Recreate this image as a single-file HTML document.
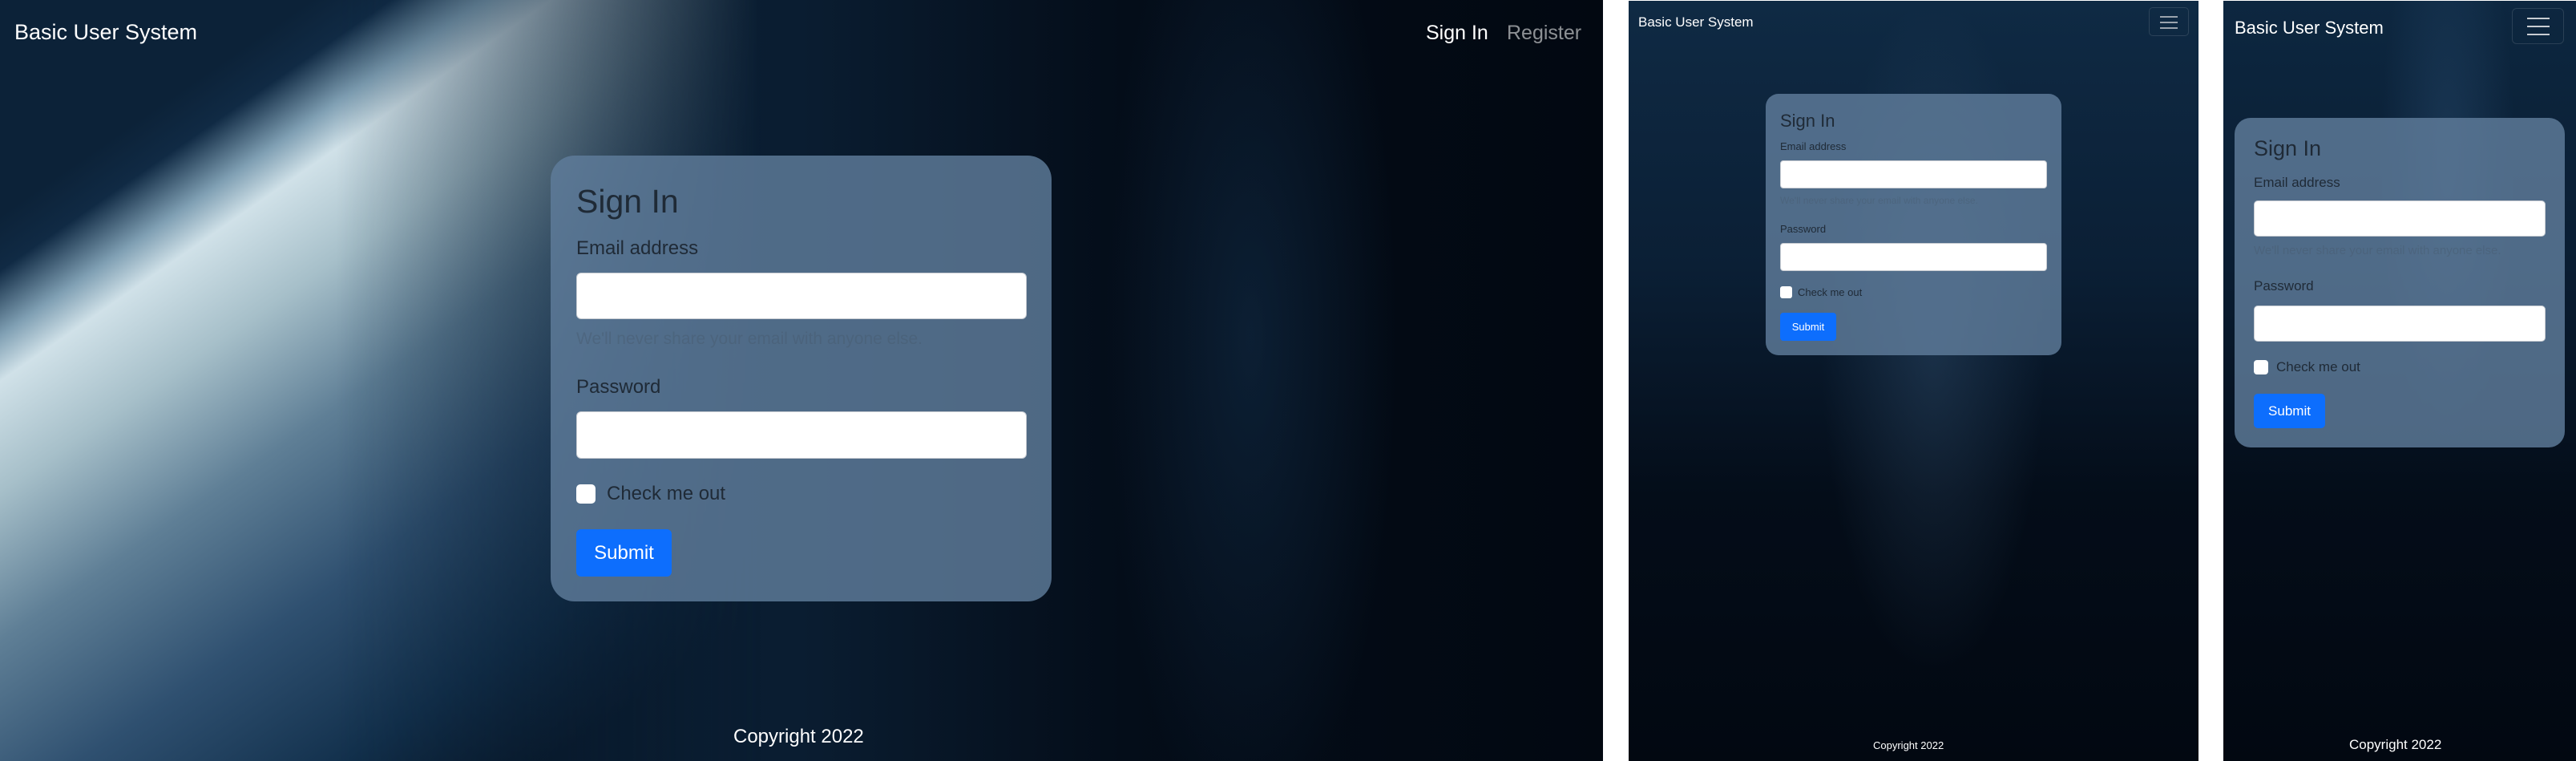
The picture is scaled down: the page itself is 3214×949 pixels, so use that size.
<!DOCTYPE html>
<html><head><meta charset="utf-8"><style>
*{box-sizing:border-box;margin:0;padding:0}
body{width:3214px;height:949px;background:#fff;position:relative;overflow:hidden;font-family:"Liberation Sans",sans-serif}
.p{position:absolute;top:0;height:949px;overflow:hidden}
.a{position:absolute;white-space:nowrap}
.card{position:absolute;background:rgba(95,125,155,0.82)}
.in{position:absolute;background:#fff;border:1px solid #c8ccd2}
.btn{position:absolute;background:#0d6efd;color:#fff;text-align:center}
.cb{position:absolute;background:#fff}
.t{color:#1f2a36}
</style></head><body>

<!-- Panel 1 -->
<div class="p" style="left:0;width:2000px;background:
radial-gradient(ellipse 260px 900px at 1560px 420px, rgba(20,50,80,0.5), transparent 70%),
linear-gradient(90deg,#0c2238 0%,#0a1d31 50%,#040d19 70%,#020811 100%);">
  <svg width="2000" height="949" style="position:absolute;left:0;top:0">
    <defs>
      <linearGradient id="s" gradientUnits="userSpaceOnUse" x1="240" y1="102" x2="780" y2="883">
        <stop offset="0" stop-color="#0c2238"/>
        <stop offset="0.06" stop-color="#102a44"/>
        <stop offset="0.13" stop-color="#7f9fb3"/>
        <stop offset="0.18" stop-color="#d0e1e8"/>
        <stop offset="0.30" stop-color="#a6bfc9"/>
        <stop offset="0.46" stop-color="#5f7f96"/>
        <stop offset="0.65" stop-color="#2f5070"/>
        <stop offset="0.85" stop-color="#12304c"/>
        <stop offset="1" stop-color="#071627"/>
      </linearGradient>
      <linearGradient id="m" gradientUnits="userSpaceOnUse" x1="0" y1="0" x2="1000" y2="0">
        <stop offset="0.42" stop-color="#fff"/>
        <stop offset="0.95" stop-color="#000"/>
      </linearGradient>
      <mask id="mk"><rect width="2000" height="949" fill="url(#m)"/></mask>
    </defs>
    <rect width="2000" height="949" fill="url(#s)" mask="url(#mk)"/>
  </svg>
  <div class="a" style="left:18px;top:25px;font-size:27px;color:#fff">Basic User System</div>
  <div class="a" style="left:1779px;top:27px;font-size:25px;color:#fff">Sign In</div>
  <div class="a" style="left:1880px;top:27px;font-size:25px;color:rgba(255,255,255,0.55)">Register</div>
  <div class="card" style="left:687px;top:194px;width:625px;height:556px;border-radius:30px"></div>
  <div class="a t" style="left:719px;top:228px;font-size:41px">Sign In</div>
  <div class="a t" style="left:719px;top:296px;font-size:24px">Email address</div>
  <div class="in" style="left:719px;top:340px;width:562px;height:58px;border-radius:6px"></div>
  <div class="a" style="left:719px;top:411px;font-size:21px;color:rgba(70,90,110,0.45)">We'll never share your email with anyone else.</div>
  <div class="a t" style="left:719px;top:469px;font-size:24px">Password</div>
  <div class="in" style="left:719px;top:513px;width:562px;height:59px;border-radius:6px"></div>
  <div class="cb" style="left:719px;top:604px;width:24px;height:24px;border-radius:5px"></div>
  <div class="a t" style="left:757px;top:602px;font-size:24px">Check me out</div>
  <div class="btn" style="left:719px;top:660px;width:119px;height:59px;border-radius:6px;font-size:24px;line-height:59px">Submit</div>
  <div class="a" style="left:915px;top:905px;font-size:24px;color:#fff">Copyright 2022</div>
</div>

<!-- Panel 2 -->
<div class="p" style="left:2032px;width:711px;top:1px;height:948px;background:
radial-gradient(ellipse 200px 600px at 380px 420px, rgba(60,95,130,0.35), transparent 70%),
linear-gradient(180deg,#0f2a44 0%,#0b1f35 35%,#040d19 65%,#020811 100%);">
  <div class="a" style="left:12px;top:17px;font-size:17px;color:#fff">Basic User System</div>
  <div class="a" style="left:649px;top:8px;width:50px;height:36px;border:1px solid rgba(255,255,255,0.12);border-radius:5px">
    <div style="position:absolute;left:13px;top:10px;width:22px;height:2px;background:#9aa3ad"></div>
    <div style="position:absolute;left:13px;top:17px;width:22px;height:2px;background:#9aa3ad"></div>
    <div style="position:absolute;left:13px;top:24px;width:22px;height:2px;background:#9aa3ad"></div>
  </div>
  <div class="card" style="left:171px;top:116px;width:369px;height:326px;border-radius:16px"></div>
  <div class="a t" style="left:189px;top:137px;font-size:22px">Sign In</div>
  <div class="a t" style="left:189px;top:174px;font-size:13px">Email address</div>
  <div class="in" style="left:189px;top:199px;width:333px;height:35px;border-radius:4px"></div>
  <div class="a" style="left:189px;top:242px;font-size:12px;color:rgba(70,90,110,0.45)">We'll never share your email with anyone else.</div>
  <div class="a t" style="left:189px;top:277px;font-size:13px">Password</div>
  <div class="in" style="left:189px;top:302px;width:333px;height:35px;border-radius:4px"></div>
  <div class="cb" style="left:189px;top:356px;width:15px;height:15px;border-radius:3px"></div>
  <div class="a t" style="left:211px;top:356px;font-size:13px">Check me out</div>
  <div class="btn" style="left:189px;top:389px;width:70px;height:35px;border-radius:4px;font-size:13px;line-height:35px">Submit</div>
  <div class="a" style="left:305px;top:921px;font-size:13px;color:#fff">Copyright 2022</div>
</div>

<!-- Panel 3 -->
<div class="p" style="left:2774px;width:440px;top:1px;height:948px;background:
radial-gradient(ellipse 120px 500px at 280px 200px, rgba(50,90,130,0.35), transparent 70%),
linear-gradient(180deg,#0d2740 0%,#0a1d32 35%,#040d19 65%,#020811 100%);">
  <div class="a" style="left:14px;top:21px;font-size:22px;color:#fff">Basic User System</div>
  <div class="a" style="left:360px;top:9px;width:65px;height:45px;border:1px solid rgba(255,255,255,0.12);border-radius:6px">
    <div style="position:absolute;left:18px;top:11px;width:28px;height:2px;background:#c8ccd2"></div>
    <div style="position:absolute;left:18px;top:21px;width:28px;height:2px;background:#c8ccd2"></div>
    <div style="position:absolute;left:18px;top:31px;width:28px;height:2px;background:#c8ccd2"></div>
  </div>
  <div class="card" style="left:14px;top:146px;width:412px;height:411px;border-radius:20px"></div>
  <div class="a t" style="left:38px;top:169px;font-size:27px">Sign In</div>
  <div class="a t" style="left:38px;top:217px;font-size:17px">Email address</div>
  <div class="in" style="left:38px;top:249px;width:364px;height:45px;border-radius:5px"></div>
  <div class="a" style="left:38px;top:303px;font-size:15px;color:rgba(70,90,110,0.45)">We'll never share your email with anyone else.</div>
  <div class="a t" style="left:38px;top:346px;font-size:17px">Password</div>
  <div class="in" style="left:38px;top:380px;width:364px;height:45px;border-radius:5px"></div>
  <div class="cb" style="left:38px;top:448px;width:18px;height:18px;border-radius:4px"></div>
  <div class="a t" style="left:66px;top:447px;font-size:17px">Check me out</div>
  <div class="btn" style="left:38px;top:490px;width:89px;height:43px;border-radius:5px;font-size:17px;line-height:43px">Submit</div>
  <div class="a" style="left:157px;top:918px;font-size:17px;color:#fff">Copyright 2022</div>
</div>
</body></html>
